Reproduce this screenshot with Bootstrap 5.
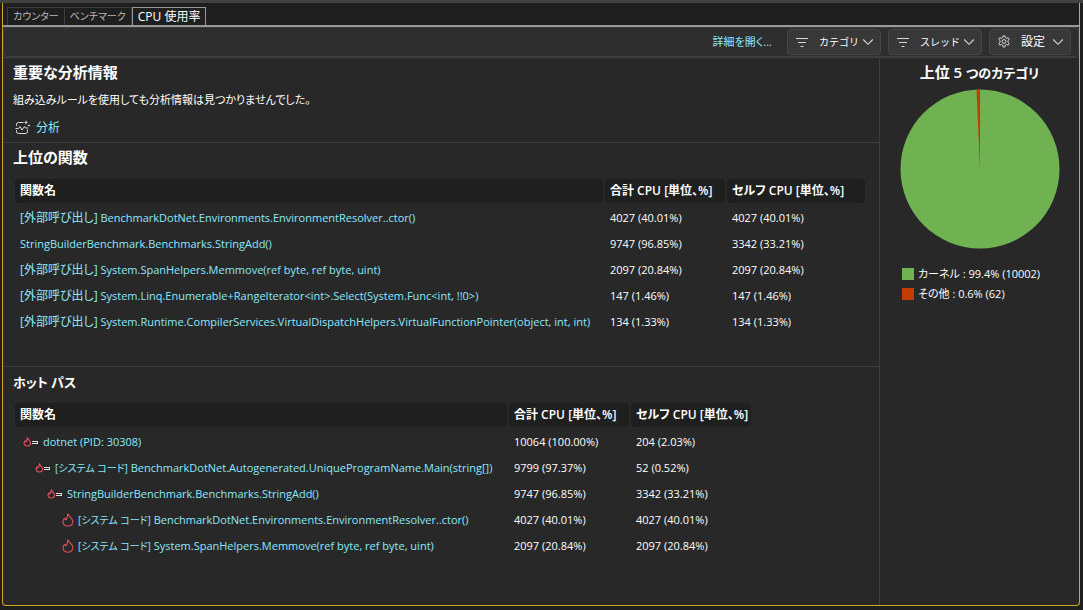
<!DOCTYPE html>
<html lang="ja" data-bs-theme="dark">
<head>
<meta charset="utf-8">
<meta name="viewport" content="width=device-width, initial-scale=1">
<title>CPU 使用率</title>
<link rel="stylesheet" href="https://cdn.jsdelivr.net/npm/bootstrap@5.3.0/dist/css/bootstrap.min.css">
<style>
  body { background: #1f1f1f; color: #fff; font: 11px/16px "Open Sans", "Noto Sans CJK JP", sans-serif; font-feature-settings: "palt"; border-top: 3px solid #424242; }
  a { color: #8be9fd; text-decoration: none; }
  a:hover { text-decoration: underline; }
  h2 { font-size: 15px; line-height: 20px; font-weight: 600; margin: 0; }
  h2 .kana { font-size: 13px; line-height: 1; }
  td a .kana, .btn .kana { font-size: 10px; }
  .kanji { font-size: 12px; }
  .window-frame { margin: 0 3px 3px 2px; border: 1px solid #d1a828; border-top: 0; border-radius: 0 0 4px 4px; background: #282828; overflow: hidden; }
  .doc-tabs { background: #1f1f1f; padding: 4px 4px 0; border-bottom: 2px solid #999; }
  .doc-tabs .nav-link { height: 18px; padding: 0 5px; border: 1px solid #3d3d3d; border-bottom: 0; border-radius: 0; color: #b8b8b8; font-size: 10px; line-height: 17px; background: #1f1f1f; }
  .doc-tabs .nav-item + .nav-item .nav-link { border-left: 0; }
  .doc-tabs .nav-item .nav-link.active { border: 1px solid #999; border-bottom: 0; color: #fff; font-size: 12px; }
  .doc-tabs .nav-item + .nav-item .nav-link.active { border-left: 1px solid #999; }
  .tool-strip { height: 30px; background: #2e2e2e; border: 1px solid #3d3d3d; border-radius: 4px; padding: 0 7px; gap: 7px; }
  .tool-strip .btn { height: 26px; padding: 0 6px 0 7px; border: 1px solid #464646; border-radius: 4px; background: #383838; color: #fff; font-size: 12px; line-height: 16px; }
  .tool-strip .btn svg:first-child { margin-right: 10px; }
  .tool-strip .btn svg:last-child { margin-left: 7px; }
  .tool-strip .btn .kana + svg:last-child { margin-left: 3px; }
  .pane { padding: 4px 10px 0; border-bottom: 1px solid #3d3d3d; }
  .pane-top { padding-bottom: 2px; }
  .pane-mid { padding-bottom: 31px; }
  .pane-end { padding-bottom: 46px; }
  .insight { margin: 10px 0 8px; }
  .analyze { height: 24px; padding-left: 2px; gap: 5px; }
  .report { border-right: 1px solid #3d3d3d; border-top: 1px solid #3d3d3d; }
  .grid-table { table-layout: fixed; border-collapse: separate; border-spacing: 2px; margin-top: 10px; }
  .grid-table th, .grid-table td { height: 24px; padding: 0 2px 0 5px; white-space: nowrap; }
  .grid-table td { padding-top: 1px; }
  .grid-table th { background: #1f1f1f; border-radius: 4px; font-size: 12px; font-weight: 600; }
  .name-wide { width: 588px; } .name-path { width: 492px; }
  .metric { width: 120px; } .metric-wide { width: 138px; }
  .level-1 { padding-left: 3px; } .level-2 { padding-left: 15px; }
  .level-3 { padding-left: 27px; } .level-4 { padding-left: 38px; }
  .side { width: 199px; border-top: 1px solid #3d3d3d; }
  .side h2 { padding-top: 4px; margin-bottom: 7px; }
  .legend-list { padding: 17px 0 0 22px; }
  .swatch { width: 12px; height: 12px; }
</style>
</head>
<body>
<svg class="d-none" xmlns="http://www.w3.org/2000/svg">
  <symbol id="filter" viewBox="0 0 14 14"><path d="M1 3.500h12M3 7.500h8M5.500 11.500h3" fill="none" stroke="#d6d6d6"/></symbol>
  <symbol id="chevron" viewBox="0 0 12 12"><path d="M1.200 3.500 6 8.300l4.800-4.800" fill="none" stroke="#d6d6d6" stroke-width="1.100"/></symbol>
  <symbol id="flame" viewBox="0 0 12 14"><path d="M6 .8C6.300 3 9.500 4.800 10.600 7.200c1 3-1 6-4.600 6s-5.400-2.600-5-5C1.300 6.500 2 5.500 3 5.200c.2.900.4 1.400.9 1.700C5.500 5.800 5.200 2.800 6 .8z" fill="none" stroke="#e8505b" stroke-width="1.100" stroke-linejoin="round"/></symbol>
  <symbol id="flame-path" viewBox="0 0 16 10"><path d="M4.500.8C4.700 2.200 7 3.500 7.500 5.400c.5 2-.9 3.600-3.200 3.600S.8 7.300 1.100 5.700c.1-1 .6-1.600 1.200-1.900.2.600.3.900.7 1.100C4 4 3.900 2.400 4.500.8z" fill="none" stroke="#e8505b" stroke-width="1.100" stroke-linejoin="round"/><path d="M9 4.500h6M9 6.500h6M14.500 4.500v2" fill="none" stroke="#e0e0e0"/></symbol>
</svg>

<div class="window-frame d-flex flex-column">
  <ul class="nav doc-tabs">
    <li class="nav-item"><a class="nav-link" href="#">カウンター</a></li>
    <li class="nav-item"><a class="nav-link" href="#">ベンチマーク</a></li>
    <li class="nav-item"><a class="nav-link active" href="#" aria-current="page">CPU 使用率</a></li>
  </ul>

  <div class="tool-strip d-flex align-items-center justify-content-end">
    <a href="#" class="me-2">詳細を開く...</a>
    <button type="button" class="btn d-flex align-items-center"><svg width="14" height="14"><use href="#filter"/></svg><span class="kana">カテゴリ</span><svg width="12" height="12"><use href="#chevron"/></svg></button>
    <button type="button" class="btn d-flex align-items-center"><svg width="14" height="14"><use href="#filter"/></svg><span class="kana">スレッド</span><svg width="12" height="12"><use href="#chevron"/></svg></button>
    <button type="button" class="btn d-flex align-items-center"><svg width="14" height="14" viewBox="0 0 14 14" fill="none" stroke="#d6d6d6"><path d="M5.700 2.600 6 .900h2l.3 1.700 1.300.7 1.600-.6 1 1.800-1.300 1.100v1.600l1.300 1.100-1 1.800-1.600-.6-1.300.7-.3 1.700H6l-.3-1.700-1.300-.7-1.600.6-1-1.800 1.300-1.100V5.600L1.800 4.500l1-1.800 1.600.6z"/><circle cx="7" cy="6.500" r="1.900"/></svg>設定<svg width="12" height="12"><use href="#chevron"/></svg></button>
  </div>

  <div class="d-flex flex-grow-1">
    <main class="report flex-grow-1">
      <section class="pane pane-top">
        <h2>重要な分析情報</h2>
        <p class="insight">組み込みルールを使用しても分析情報は見つかりませんでした。</p>
        <div class="analyze d-flex align-items-center">
          <svg width="16" height="16" viewBox="0 0 16 16" fill="none" stroke="#dcdcdc"><path d="M8.500 2.500H3.500a2 2 0 0 0-2 2V6M1.500 10v1.500a2 2 0 0 0 2 2h7a2 2 0 0 0 2-2V9.500M.5 8.500h3l1.500-2 2 3.500 2.500-3.500 1 1.500h2.500"/><path d="m11 0 .6 1.900 1.900.6-1.900.6L11 5l-.6-1.900-1.900-.6 1.900-.6zM14 4l.4 1.100 1.100.4-1.100.4L14 7l-.4-1.100-1.100-.4 1.100-.4z" fill="#dcdcdc" stroke="none"/></svg>
          <a href="#" class="kanji">分析</a>
        </div>
      </section>

      <section class="pane pane-mid">
        <h2>上位の関数</h2>
        <table class="grid-table">
          <colgroup><col class="name-wide"><col class="metric"><col class="metric-wide"></colgroup>
          <thead><tr><th>関数名</th><th>合計 CPU [単位、%]</th><th>セルフ CPU [単位、%]</th></tr></thead>
          <tbody>
            <tr><td><a href="#"><span class="kanji">[外部呼び出し]</span> BenchmarkDotNet.Environments.EnvironmentResolver..ctor()</a></td><td>4027 (40.01%)</td><td>4027 (40.01%)</td></tr>
            <tr><td><a href="#">StringBuilderBenchmark.Benchmarks.StringAdd()</a></td><td>9747 (96.85%)</td><td>3342 (33.21%)</td></tr>
            <tr><td><a href="#"><span class="kanji">[外部呼び出し]</span> System.SpanHelpers.Memmove(ref byte, ref byte, uint)</a></td><td>2097 (20.84%)</td><td>2097 (20.84%)</td></tr>
            <tr><td><a href="#"><span class="kanji">[外部呼び出し]</span> System.Linq.Enumerable+RangeIterator&lt;int&gt;.Select(System.Func&lt;int, !!0&gt;)</a></td><td>147 (1.46%)</td><td>147 (1.46%)</td></tr>
            <tr><td><a href="#"><span class="kanji">[外部呼び出し]</span> System.Runtime.CompilerServices.VirtualDispatchHelpers.VirtualFunctionPointer(object, int, int)</a></td><td>134 (1.33%)</td><td>134 (1.33%)</td></tr>
          </tbody>
        </table>
      </section>

      <section class="pane pane-end border-bottom-0">
        <h2><span class="kana">ホット パス</span></h2>
        <table class="grid-table">
          <colgroup><col class="name-path"><col class="metric"><col class="metric"></colgroup>
          <thead><tr><th>関数名</th><th>合計 CPU [単位、%]</th><th>セルフ CPU [単位、%]</th></tr></thead>
          <tbody>
            <tr><td><div class="level-1 d-flex align-items-center"><svg class="me-1" width="16" height="10"><use href="#flame-path"/></svg><a href="#">dotnet (PID: 30308)</a></div></td><td>10064 (100.00%)</td><td>204 (2.03%)</td></tr>
            <tr><td><div class="level-2 d-flex align-items-center"><svg class="me-1" width="16" height="10"><use href="#flame-path"/></svg><a href="#"><span class="kana">[システム コード]</span> BenchmarkDotNet.Autogenerated.UniqueProgramName.Main(string[])</a></div></td><td>9799 (97.37%)</td><td>52 (0.52%)</td></tr>
            <tr><td><div class="level-3 d-flex align-items-center"><svg class="me-1" width="16" height="10"><use href="#flame-path"/></svg><a href="#">StringBuilderBenchmark.Benchmarks.StringAdd()</a></div></td><td>9747 (96.85%)</td><td>3342 (33.21%)</td></tr>
            <tr><td><div class="level-4 d-flex align-items-center"><svg class="mx-1" width="12" height="14"><use href="#flame"/></svg><a href="#"><span class="kana">[システム コード]</span> BenchmarkDotNet.Environments.EnvironmentResolver..ctor()</a></div></td><td>4027 (40.01%)</td><td>4027 (40.01%)</td></tr>
            <tr><td><div class="level-4 d-flex align-items-center"><svg class="mx-1" width="12" height="14"><use href="#flame"/></svg><a href="#"><span class="kana">[システム コード]</span> System.SpanHelpers.Memmove(ref byte, ref byte, uint)</a></div></td><td>2097 (20.84%)</td><td>2097 (20.84%)</td></tr>
          </tbody>
        </table>
      </section>
    </main>

    <aside class="side flex-shrink-0">
      <h2 class="text-center">上位 5 <span class="kana">つのカテゴリ</span></h2>
      <svg class="d-block mx-auto" width="160" height="160" viewBox="-80 -80 160 160"><circle r="79.500" fill="#70b252"/><path d="M0 0V-79.500A79.500 79.500 0 0 0-3.500-79.400z" fill="#c23d00"/></svg>
      <ul class="list-unstyled mb-0 legend-list">
        <li class="d-flex align-items-center mb-1"><span class="swatch me-1" style="background:#70b252"></span>カーネル : 99.4% (10002)</li>
        <li class="d-flex align-items-center"><span class="swatch me-1" style="background:#c23d00"></span>その他 : 0.6% (62)</li>
      </ul>
    </aside>
  </div>
</div>
<script src="https://cdn.jsdelivr.net/npm/bootstrap@5.3.0/dist/js/bootstrap.bundle.min.js"></script>
</body>
</html>
